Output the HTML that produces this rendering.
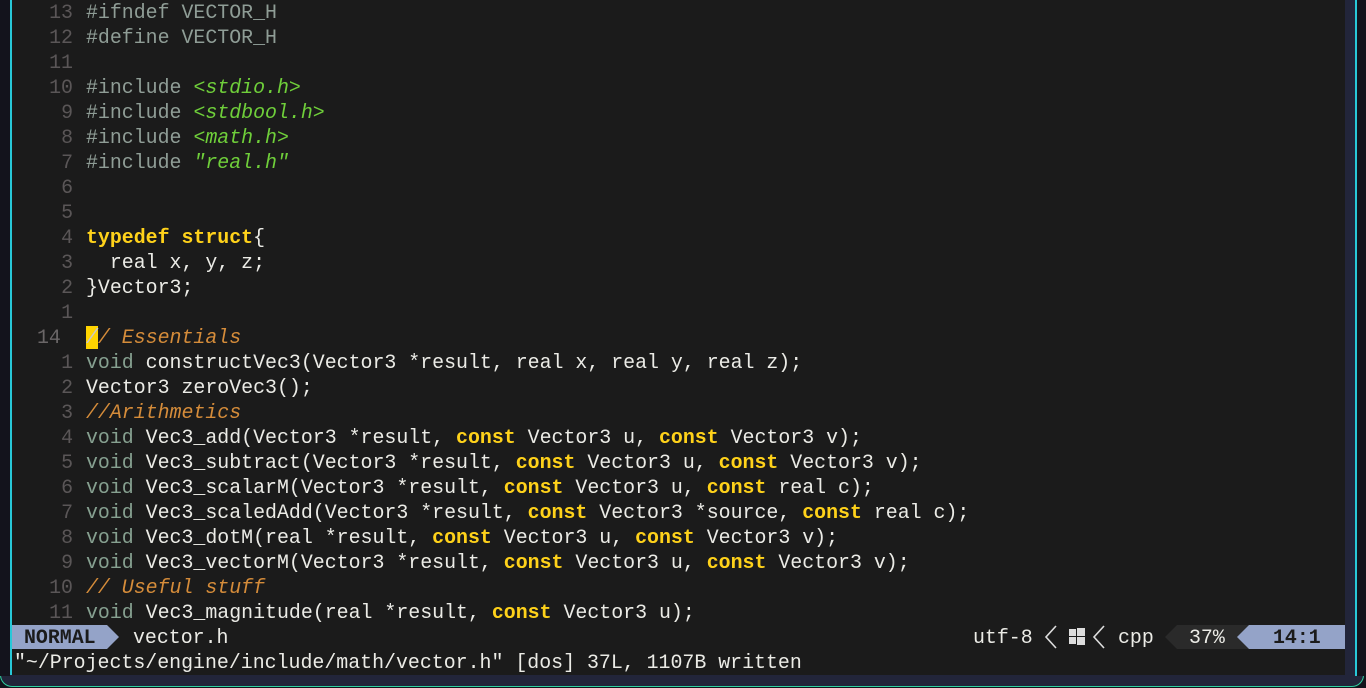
<!DOCTYPE html>
<html><head><meta charset="utf-8"><style>
html,body{margin:0;padding:0;width:1366px;height:688px;overflow:hidden;background:#13131c;}
#frame{position:absolute;left:0;top:-20px;width:1364px;height:707px;border:1px solid #2fd0a0;border-top:none;border-radius:0 0 12px 12px;background:#22253a;box-sizing:border-box;}
#ed{position:absolute;left:12px;top:0;width:1333px;height:675px;background:#1b1b1b;}
#lc{position:absolute;left:10px;top:0;width:2px;height:675px;background:#28c8d8;}
#rc{position:absolute;left:1355px;top:0;width:2px;height:676px;background:#28c8d8;}
#lft{position:absolute;left:0;top:0;width:10px;height:676px;background:#13131c;}
#rgt{position:absolute;left:1357px;top:0;width:9px;height:676px;background:#13131c;}
.r{position:absolute;left:0;height:25px;line-height:25px;font-family:"Liberation Mono",monospace;font-size:19.9px;white-space:pre;color:#ebebe6;}
.n{position:absolute;left:37px;width:36px;text-align:right;color:#5a5657;}
.t{position:absolute;left:86px;}
.p{color:#8f9d96}.v{color:#86a090}
.s{color:#6fcf3a;font-style:italic}
.k{color:#ffd21a;font-weight:bold}
.c{color:#d58c3a;font-style:italic}
</style></head><body>
<div id="frame"></div>
<div id="lft"></div><div id="rgt"></div>
<div id="ed"></div>
<div id="lc"></div><div id="rc"></div>
<div class="r" style="top:0"><span class="n">13</span><span class="t"><span class="p">#ifndef VECTOR_H</span></span></div>
<div class="r" style="top:25px"><span class="n">12</span><span class="t"><span class="p">#define VECTOR_H</span></span></div>
<div class="r" style="top:50px"><span class="n">11</span></div>
<div class="r" style="top:75px"><span class="n">10</span><span class="t"><span class="p">#include </span><span class="s">&lt;stdio.h&gt;</span></span></div>
<div class="r" style="top:100px"><span class="n">9</span><span class="t"><span class="p">#include </span><span class="s">&lt;stdbool.h&gt;</span></span></div>
<div class="r" style="top:125px"><span class="n">8</span><span class="t"><span class="p">#include </span><span class="s">&lt;math.h&gt;</span></span></div>
<div class="r" style="top:150px"><span class="n">7</span><span class="t"><span class="p">#include </span><span class="s">"real.h"</span></span></div>
<div class="r" style="top:175px"><span class="n">6</span></div>
<div class="r" style="top:200px"><span class="n">5</span></div>
<div class="r" style="top:225px"><span class="n">4</span><span class="t"><span class="k">typedef struct</span>{</span></div>
<div class="r" style="top:250px"><span class="n">3</span><span class="t">  real x, y, z;</span></div>
<div class="r" style="top:275px"><span class="n">2</span><span class="t">}Vector3;</span></div>
<div class="r" style="top:300px"><span class="n">1</span></div>
<div class="r" style="top:325px"><span class="n" style="text-align:left;color:#6a6667">14</span><span class="t"><span style="background:#ffd400;color:#c8c8c8;font-style:italic">/</span><span class="c">/ Essentials</span></span></div>
<div class="r" style="top:350px"><span class="n">1</span><span class="t"><span class="v">void</span> constructVec3(Vector3 *result, real x, real y, real z);</span></div>
<div class="r" style="top:375px"><span class="n">2</span><span class="t">Vector3 zeroVec3();</span></div>
<div class="r" style="top:400px"><span class="n">3</span><span class="t"><span class="c">//Arithmetics</span></span></div>
<div class="r" style="top:425px"><span class="n">4</span><span class="t"><span class="v">void</span> Vec3_add(Vector3 *result, <span class="k">const</span> Vector3 u, <span class="k">const</span> Vector3 v);</span></div>
<div class="r" style="top:450px"><span class="n">5</span><span class="t"><span class="v">void</span> Vec3_subtract(Vector3 *result, <span class="k">const</span> Vector3 u, <span class="k">const</span> Vector3 v);</span></div>
<div class="r" style="top:475px"><span class="n">6</span><span class="t"><span class="v">void</span> Vec3_scalarM(Vector3 *result, <span class="k">const</span> Vector3 u, <span class="k">const</span> real c);</span></div>
<div class="r" style="top:500px"><span class="n">7</span><span class="t"><span class="v">void</span> Vec3_scaledAdd(Vector3 *result, <span class="k">const</span> Vector3 *source, <span class="k">const</span> real c);</span></div>
<div class="r" style="top:525px"><span class="n">8</span><span class="t"><span class="v">void</span> Vec3_dotM(real *result, <span class="k">const</span> Vector3 u, <span class="k">const</span> Vector3 v);</span></div>
<div class="r" style="top:550px"><span class="n">9</span><span class="t"><span class="v">void</span> Vec3_vectorM(Vector3 *result, <span class="k">const</span> Vector3 u, <span class="k">const</span> Vector3 v);</span></div>
<div class="r" style="top:575px"><span class="n">10</span><span class="t"><span class="c">// Useful stuff</span></span></div>
<div class="r" style="top:600px"><span class="n">11</span><span class="t"><span class="v">void</span> Vec3_magnitude(real *result, <span class="k">const</span> Vector3 u);</span></div>
<!-- status line -->
<div style="position:absolute;left:12px;top:625px;width:1333px;height:25px;background:#1b1b1b"></div>
<div style="position:absolute;left:12px;top:625px;width:95px;height:24px;background:#94a3c8"></div>
<svg style="position:absolute;left:107px;top:625px" width="13" height="24"><polygon points="0,0 12,12 0,24" fill="#94a3c8"/></svg>
<div class="r" style="top:625px;left:24px;color:#1b1b1b;font-weight:bold">NORMAL</div>
<div class="r" style="top:625px;left:133px">vector.h</div>
<div class="r" style="top:625px;left:973px">utf-8</div>
<svg style="position:absolute;left:1042px;top:625px" width="66" height="24"><polyline points="14,1 4,12 14,23" fill="none" stroke="#ddd" stroke-width="1.6"/><rect x="27" y="4" width="7" height="7" fill="#ddd"/><rect x="35" y="3" width="8" height="8" fill="#ddd"/><rect x="27" y="12" width="7" height="7" fill="#ddd"/><rect x="35" y="12" width="8" height="8" fill="#ddd"/><polyline points="62,1 52,12 62,23" fill="none" stroke="#ddd" stroke-width="1.6"/></svg>
<div class="r" style="top:625px;left:1118px">cpp</div>
<svg style="position:absolute;left:1165px;top:625px" width="180" height="24"><polygon points="0,12 12,0 84,0 84,24 12,24" fill="#2a2a2a"/><polygon points="72,12 84,0 180,0 180,24 84,24" fill="#94a3c8"/></svg>
<div class="r" style="top:625px;left:1189px">37%</div>
<div class="r" style="top:625px;left:1273px;color:#1b1b1b;font-weight:bold">14:1</div>
<div class="r" style="top:650px;left:14px">"~/Projects/engine/include/math/vector.h" [dos] 37L, 1107B written</div>
</body></html>
